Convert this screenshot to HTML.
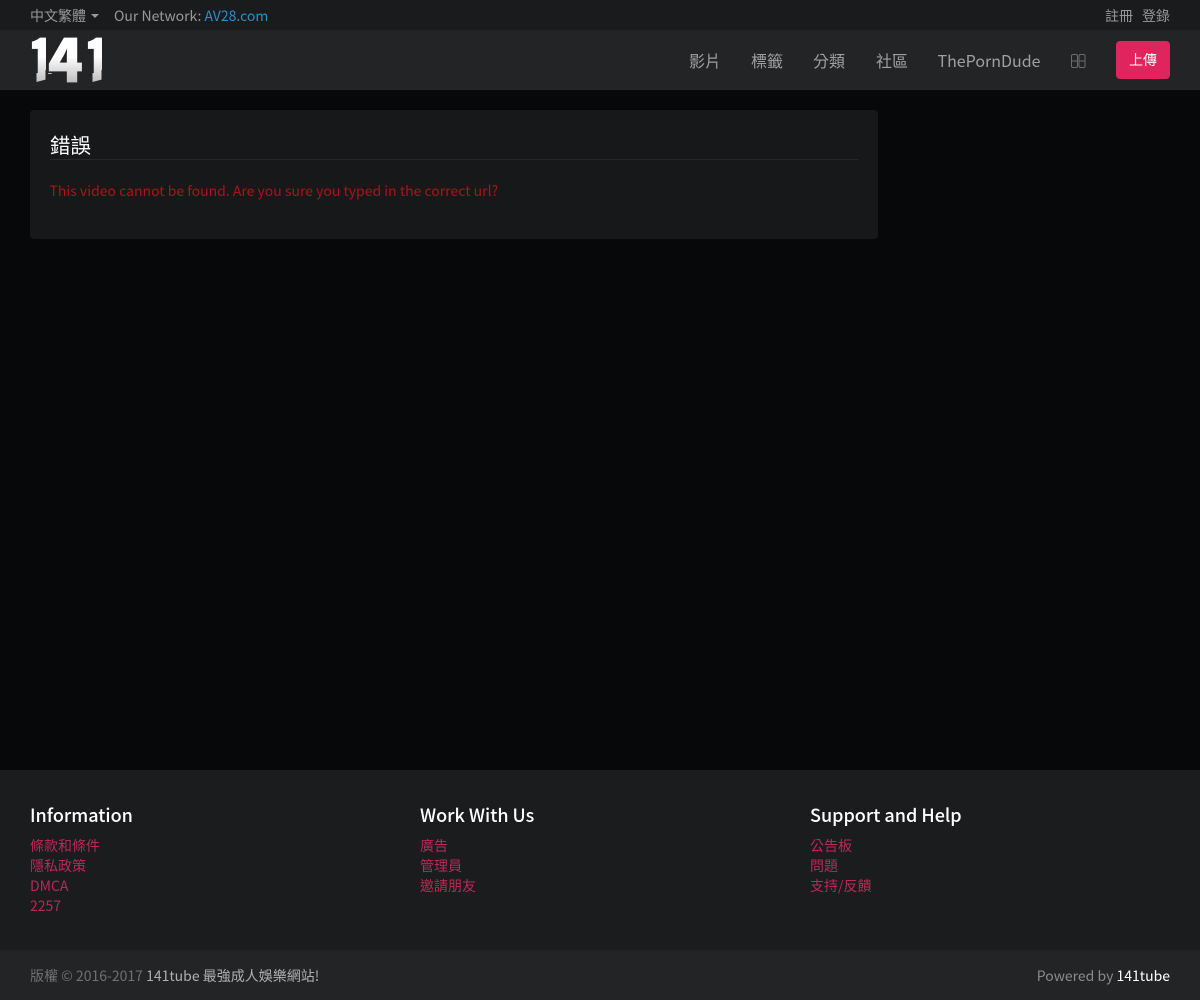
<!DOCTYPE html>
<html lang="zh-Hant">
<head>
<meta charset="utf-8">
<title>141tube</title>
<style>
*{box-sizing:border-box}
html,body{margin:0;padding:0}
body{width:1200px;height:1000px;overflow:hidden;position:relative;background:#06080a;font-family:"Noto Sans CJK SC","Liberation Sans",sans-serif;font-size:14px;line-height:20px;color:#999}
.a{position:absolute;white-space:nowrap}
#top{left:0;top:0;width:1200px;height:30px;background:#191b1d}
#head{left:0;top:30px;width:1200px;height:60px;background:#222426;border-top:1px solid #1f2123}
.nav{top:49px;font-size:16px;line-height:22px;color:#a0a0a0}
#up{left:1116px;top:41px;width:54px;height:38px;border-radius:4px;background:#e0245e;color:#fff;text-align:center;line-height:38px}
#card{left:30px;top:110px;width:848px;height:129px;background:#16181a;border-radius:4px}
#cardline{left:50px;top:159px;width:808px;height:1px;background:#26282a}
#foot{left:0;top:770px;width:1200px;height:180px;background:#1a1c1e}
#bot{left:0;top:950px;width:1200px;height:50px;background:#222426;border-top:1px solid #1f2123}
.h{top:803px;font-size:18px;line-height:24px;color:#fff;font-weight:500}
.l{color:#b92a55}
</style>
</head>
<body>
<div class="a" id="top"></div>
<div class="a" id="head"></div>

<div class="a" style="left:30px;top:6px">中文繁體</div>
<div class="a" style="left:91px;top:14px;width:0;height:0;border-left:4px solid transparent;border-right:4px solid transparent;border-top:4px solid #999"></div>
<div class="a" style="left:114px;top:6px">Our Network: <span style="color:#2e8fc4">AV28.com</span></div>
<div class="a" style="left:1105px;top:6px">註冊</div>
<div class="a" style="left:1142px;top:6px">登錄</div>

<svg class="a" style="left:20px;top:30px" width="90" height="60" viewBox="0 0 90 60">
<defs><linearGradient id="g" gradientUnits="userSpaceOnUse" x1="0" y1="8" x2="0" y2="53"><stop offset="0" stop-color="#fff"/><stop offset=".4" stop-color="#fff"/><stop offset="1" stop-color="#bdbdbd"/></linearGradient></defs>
<g font-family="'Noto Sans CJK SC',sans-serif" font-weight="900" font-size="59" fill="url(#g)" stroke="url(#g)" stroke-width=".8">
<text x="8" y="52" textLength="26" lengthAdjust="spacingAndGlyphs">1</text>
<text x="28" y="52" textLength="35" lengthAdjust="spacingAndGlyphs">4</text>
<text x="64" y="52" textLength="26" lengthAdjust="spacingAndGlyphs">1</text>
</g>
<g fill="#222426">
<rect x="4" y="40" width="12.5" height="15"/><rect x="25.5" y="44" width="18" height="11"/><rect x="25.5" y="40" width="2.5" height="5"/>
<rect x="64" y="40" width="8.5" height="15"/><rect x="81.5" y="40" width="8.5" height="15"/>
<polygon points="16.5,52 26,49.5 26,55 16.5,55"/><polygon points="72.5,52 82,49.5 82,55 72.5,55"/>
</g>
</svg>

<div class="a nav" style="left:689px">影片</div>
<div class="a nav" style="left:751px">標籤</div>
<div class="a nav" style="left:813px">分類</div>
<div class="a nav" style="left:876px">社區</div>
<div class="a nav" style="left:937.5px">ThePornDude</div>
<svg class="a" style="left:1071px;top:54px" width="15" height="14" viewBox="0 0 15 14" fill="none" stroke="#6c6c6c" stroke-width="1"><rect x=".5" y=".5" width="6" height="13" rx="1.5"/><rect x="8" y=".5" width="6" height="13" rx="1.5"/><path d="M.5 7h6M8 7h6"/></svg>
<div class="a" id="up">上傳</div>

<div class="a" id="card"></div>
<div class="a" style="left:50px;top:130px;font-size:20.5px;line-height:28px;color:#fff">錯誤</div>
<div class="a" id="cardline"></div>
<div class="a" style="left:49.5px;top:181px;color:#b01216">This video cannot be found. Are you sure you typed in the correct url?</div>

<div class="a" id="foot"></div>
<div class="a h" style="left:30px">Information</div>
<div class="a l" style="left:30px;top:836px">條款和條件<br>隱私政策<br>DMCA<br>2257</div>
<div class="a h" style="left:420px">Work With Us</div>
<div class="a l" style="left:420px;top:836px">廣告<br>管理員<br>邀請朋友</div>
<div class="a h" style="left:810px">Support and Help</div>
<div class="a l" style="left:810px;top:836px">公告板<br>問題<br>支持/反饋</div>

<div class="a" id="bot"></div>
<div class="a" style="left:30px;top:966px;color:#6f7173">版權 © 2016-2017 <span style="color:#b0b0b0">141tube 最強成人娛樂網站!</span></div>
<div class="a" style="right:30px;top:966px;color:#8a8a8a">Powered by <span style="color:#fff">141tube</span></div>
</body>
</html>
